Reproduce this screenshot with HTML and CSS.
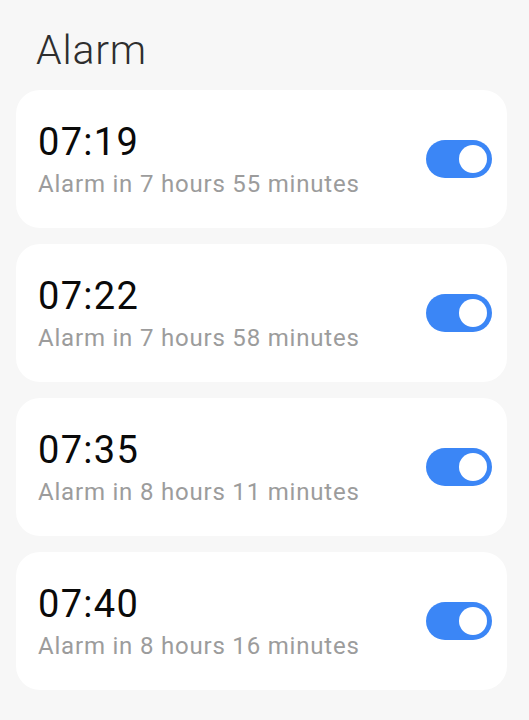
FILE: index.html
```html
<!DOCTYPE html>
<html>
<head>
<meta charset="utf-8">
<link rel="stylesheet" href="styles.css">
</head>
<body>
<div class="page">
  <h1 class="title">Alarm</h1>
  <div class="list">
    <div class="card">
      <div class="info">
        <div class="time">07:19</div>
        <div class="sub">Alarm in 7 hours 55 minutes</div>
      </div>
      <div class="toggle"><div class="knob"></div></div>
    </div>
    <div class="card">
      <div class="info">
        <div class="time">07:22</div>
        <div class="sub">Alarm in 7 hours 58 minutes</div>
      </div>
      <div class="toggle"><div class="knob"></div></div>
    </div>
    <div class="card">
      <div class="info">
        <div class="time">07:35</div>
        <div class="sub">Alarm in 8 hours 11 minutes</div>
      </div>
      <div class="toggle"><div class="knob"></div></div>
    </div>
    <div class="card">
      <div class="info">
        <div class="time">07:40</div>
        <div class="sub">Alarm in 8 hours 16 minutes</div>
      </div>
      <div class="toggle"><div class="knob"></div></div>
    </div>
  </div>
</div>
</body>
</html>
```

FILE: styles.css
```css
html, body {
  margin: 0;
  padding: 0;
  background: #f7f7f7;
}
body {
  font-family: Roboto, "Noto Sans", sans-serif;
  width: 529px;
  height: 720px;
  overflow: hidden;
}
.page {
  padding: 26px 22px 0 16px;
}
.title {
  margin: 0 0 16px 20px;
  font-size: 41px;
  line-height: 48px;
  font-weight: 300;
  letter-spacing: 0.8px;
  color: #2e2e2e;
}
.list {
  display: flex;
  flex-direction: column;
  gap: 16px;
}
.card {
  background: #ffffff;
  border-radius: 24px;
  padding: 30px 15px 30px 22px;
  display: flex;
  align-items: center;
  justify-content: space-between;
}
.info {
  display: flex;
  flex-direction: column;
  gap: 6px;
}
.time {
  font-size: 38px;
  line-height: 44px;
  letter-spacing: 1.3px;
  color: #0a0a0a;
}
.sub {
  font-size: 24px;
  line-height: 28px;
  letter-spacing: 0.8px;
  color: #9c9c9c;
}
.toggle {
  width: 66px;
  height: 38px;
  border-radius: 19px;
  background: #3b86f6;
  display: flex;
  align-items: center;
  justify-content: flex-end;
  padding: 0 5px;
  box-sizing: border-box;
}
.knob {
  width: 28px;
  height: 28px;
  border-radius: 50%;
  background: #ffffff;
}
```
